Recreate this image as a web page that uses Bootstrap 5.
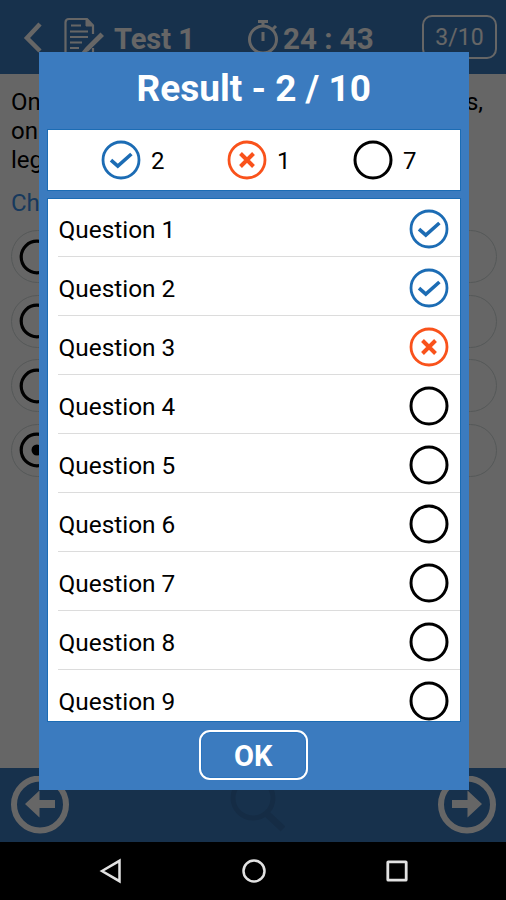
<!DOCTYPE html>
<html lang="en">
<head>
<meta charset="utf-8">
<meta name="viewport" content="width=device-width, initial-scale=1">
<title>Test 1 - Result</title>
<link href="https://cdn.jsdelivr.net/npm/bootstrap@5.3.0/dist/css/bootstrap.min.css" rel="stylesheet">
<style>
  :root { --brand: #3b7bbf; }
  body { font-family: Roboto, "Liberation Sans", sans-serif; color: #000; }
  .screen { width: 506px; height: 900px; }
  .app { height: 842px; background: #fff; }
  .topbar { height: 74px; background: var(--brand); padding-left: 22px; padding-right: 9px; color: #fff; }
  .back-ic { margin-right: 22px; }
  .test-name { font-size: 29px; font-weight: 700; margin-left: 10px; width: 133px; line-height: 1; padding-top: 5px; white-space: nowrap; }
  .clock { font-size: 29.5px; font-weight: 700; line-height: 1; padding-top: 5px; margin-left: 3px; white-space: nowrap; }
  .counter { width: 75px; height: 44px; border: 2px solid #fff; border-radius: 10px; font-size: 23px; padding-top: 3px; }
  .question { padding: 14px 23px 0 11px; font-size: 24px; line-height: 29px; height: 113px; }
  .hint { padding-left: 11px; font-size: 24px; line-height: 33px; color: #3b90e8; height: 43px; }
  .options { padding: 0 9px 0 11px; gap: 11.6px; }
  .option { height: 53px; border: 1.5px solid #d4dcdc; border-radius: 27px; padding-left: 7px; }
  .bottombar { height: 74px; background: var(--brand); padding: 0 10px 0 11px; }
  .dim { position: absolute; left: 0; top: 0; width: 506px; height: 842px; background: rgba(0,0,0,.6); }
  .result { position: absolute; left: 39px; top: 52px; width: 430px; height: 738px; background: var(--brand); padding: 0 9.500px 0 9px; }
  .result-title { height: 78px; color: #fff; font-size: 37px; font-weight: 700; line-height: 73px; }
  .panel { background: #fff; box-shadow: 0 0 0 1px #1c6cb4; }
  .summary { height: 60px; font-size: 24px; margin-bottom: 9px; padding-left: 53px; }
  .tally { width: 126px; gap: 10px; flex-shrink: 0; }
  .tally span { padding-top: 2px; }
  .questions { height: 522px; overflow: hidden; padding-left: 10px; }
  .q-row { height: 59.05px; border-bottom: 1.5px solid #dcdcdc; font-size: 24.4px; padding-right: 10.500px; padding-top: 3px; flex-shrink: 0; }
  .q-row:first-child { height: 58px; }
  .q-row span { padding-top: 3px; padding-left: .5px; }
  .ok { width: 109px; height: 50px; margin-top: 9px; margin-right: 1px; border: 2px solid #fff; border-radius: 11px; color: #fff; font-size: 29px; font-weight: 700; background: var(--brand); box-shadow: inset 0 0 0 1px #2a74bf; }
  .ok span { padding-top: 4px; }
  .sysbar { height: 58px; background: #000; gap: 119px; padding-left: 1px; }
</style>
</head>
<body>
<svg width="0" height="0" class="position-absolute" aria-hidden="true">
  <symbol id="right" viewBox="0 0 40 40"><g fill="none" stroke="#1c6cb4"><circle cx="20" cy="20" r="18" stroke-width="2.8"/><path d="M10 20.100l6.800 6.100L30.400 14" stroke-width="3.600"/></g></symbol>
  <symbol id="wrong" viewBox="0 0 40 40"><g fill="none" stroke="#f9521b"><circle cx="20" cy="20" r="18" stroke-width="2.8"/><path d="M13.500 13.500l13 13M26.500 13.500l-13 13" stroke-width="4"/></g></symbol>
  <symbol id="open" viewBox="0 0 40 40"><circle cx="20" cy="20" r="18" fill="none" stroke="#000" stroke-width="3"/></symbol>
  <symbol id="radio" viewBox="0 0 36 36"><circle cx="18" cy="18" r="15.8" fill="none" stroke="#000" stroke-width="3.2"/></symbol>
</svg>
<div class="screen position-relative overflow-hidden">
  <div class="app d-flex flex-column">
    <header class="topbar d-flex align-items-center">
      <svg class="back-ic flex-shrink-0" width="20" height="32" viewBox="0 0 20 32"><path d="M18 3L5 17l13 13" fill="none" stroke="#fff" stroke-width="4.500"/></svg>
      <svg class="flex-shrink-0" width="40" height="40" viewBox="0 0 40 40" fill="none" stroke="#fff" stroke-width="2.200">
        <path d="M29 17V8.500L23 2H5Q1.500 2 1.500 5.500V35Q1.500 38 5 38H26Q29 38 29 35V31"/>
        <path d="M22 2v7h7z" fill="#fff" stroke-width="1"/>
        <path d="M7 8.500h10M6 14.500h18M6 20h18M6 25.500h12M6 31h9" stroke-width="2"/>
        <path d="M36.500 16.500L22 31l-4 5 6-2.500L39 19z" fill="#fff" stroke-width="1.500"/>
      </svg>
      <div class="test-name">Test 1</div>
      <svg class="flex-shrink-0" width="33" height="36" viewBox="0 0 33 36" fill="none" stroke="#fff"><circle cx="16" cy="20.500" r="13.500" stroke-width="3"/><path d="M11 2.500h10M16 3v4M16 13v9M26 10l3-3" stroke-width="3"/></svg>
      <div class="clock">24 : 43</div>
      <div class="counter d-flex align-items-center justify-content-center ms-auto">3/10</div>
    </header>
    <main class="flex-grow-1">
      <div class="question">
        <div class="d-flex justify-content-between"><span>On</span><span>s,</span></div>
        <div>on</div>
        <div>leg</div>
      </div>
      <div class="hint">Ch</div>
      <div class="options d-flex flex-column">
        <div class="option d-flex align-items-center"><svg width="36" height="36"><use href="#radio"/></svg></div>
        <div class="option d-flex align-items-center"><svg width="36" height="36"><use href="#radio"/></svg></div>
        <div class="option d-flex align-items-center"><svg width="36" height="36"><use href="#radio"/></svg></div>
        <div class="option d-flex align-items-center"><svg width="36" height="36"><use href="#radio"/><circle cx="18" cy="18" r="5.500"/></svg></div>
      </div>
    </main>
    <footer class="bottombar d-flex align-items-center justify-content-between">
      <svg width="58" height="58" viewBox="0 0 58 58"><circle cx="29" cy="28.500" r="26" fill="none" stroke="#fff" stroke-width="6"/><path d="M14 28L28.500 14.500V24H44v8H28.500v9.500z" fill="#fff"/></svg>
      <svg width="62" height="62" viewBox="0 0 62 62" fill="none" stroke="#356fac"><circle cx="30" cy="24" r="20" stroke-width="5"/><path d="M43 39l17 16" stroke-width="7"/></svg>
      <svg width="58" height="58" viewBox="0 0 58 58"><circle cx="29" cy="28.500" r="26" fill="none" stroke="#fff" stroke-width="6"/><path d="M44 28L29.500 14.500V24H14v8h15.500v9.500z" fill="#fff"/></svg>
    </footer>
  </div>
  <nav class="sysbar d-flex align-items-center justify-content-center">
    <svg width="24" height="26" viewBox="0 0 24 26" fill="none" stroke="#e2e2e2" stroke-width="2.500"><path d="M3 13L20.500 2.800v20.400z"/></svg>
    <svg width="24" height="24" viewBox="0 0 24 24" fill="none" stroke="#e2e2e2" stroke-width="2.500"><circle cx="12" cy="12" r="10.500"/></svg>
    <svg width="24" height="24" viewBox="0 0 24 24" fill="none" stroke="#e2e2e2" stroke-width="2.800"><rect x="2.800" y="2.800" width="18.400" height="18.400" rx=".5"/></svg>
  </nav>
  <div class="dim"></div>
  <section class="result d-flex flex-column">
    <div class="result-title text-center">Result - 2 / 10</div>
    <div class="panel summary d-flex">
      <div class="tally d-flex align-items-center"><svg width="40" height="40"><use href="#right"/></svg><span>2</span></div>
      <div class="tally d-flex align-items-center"><svg width="40" height="40"><use href="#wrong"/></svg><span>1</span></div>
      <div class="tally d-flex align-items-center"><svg width="40" height="40"><use href="#open"/></svg><span>7</span></div>
    </div>
    <div class="panel questions d-flex flex-column">
      <div class="q-row d-flex align-items-center justify-content-between"><span>Question 1</span><svg width="40" height="40"><use href="#right"/></svg></div>
      <div class="q-row d-flex align-items-center justify-content-between"><span>Question 2</span><svg width="40" height="40"><use href="#right"/></svg></div>
      <div class="q-row d-flex align-items-center justify-content-between"><span>Question 3</span><svg width="40" height="40"><use href="#wrong"/></svg></div>
      <div class="q-row d-flex align-items-center justify-content-between"><span>Question 4</span><svg width="40" height="40"><use href="#open"/></svg></div>
      <div class="q-row d-flex align-items-center justify-content-between"><span>Question 5</span><svg width="40" height="40"><use href="#open"/></svg></div>
      <div class="q-row d-flex align-items-center justify-content-between"><span>Question 6</span><svg width="40" height="40"><use href="#open"/></svg></div>
      <div class="q-row d-flex align-items-center justify-content-between"><span>Question 7</span><svg width="40" height="40"><use href="#open"/></svg></div>
      <div class="q-row d-flex align-items-center justify-content-between"><span>Question 8</span><svg width="40" height="40"><use href="#open"/></svg></div>
      <div class="q-row d-flex align-items-center justify-content-between"><span>Question 9</span><svg width="40" height="40"><use href="#open"/></svg></div>
    </div>
    <button type="button" class="ok d-flex align-items-center justify-content-center align-self-center p-0"><span>OK</span></button>
  </section>
</div>
<script src="https://cdn.jsdelivr.net/npm/bootstrap@5.3.0/dist/js/bootstrap.bundle.min.js"></script>
</body>
</html>
